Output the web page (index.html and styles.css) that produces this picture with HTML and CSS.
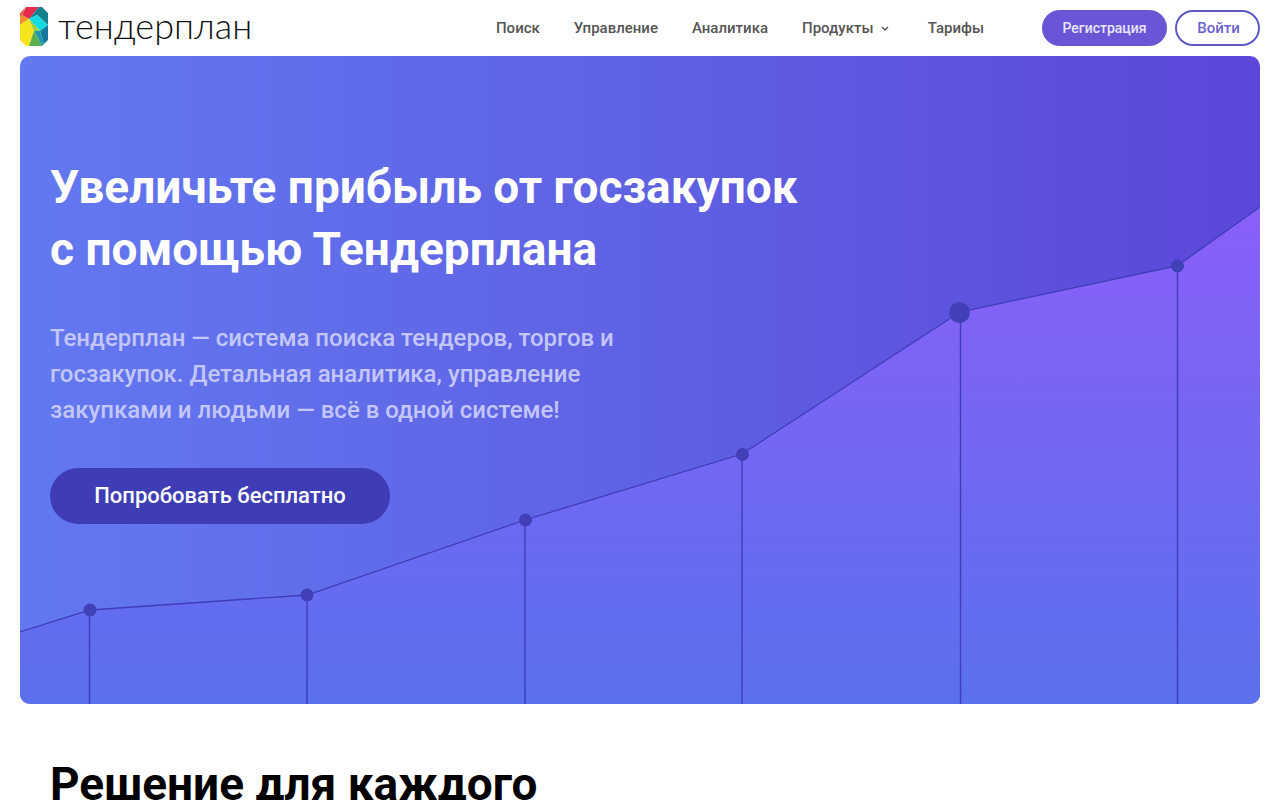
FILE: index.html
```html
<!DOCTYPE html>
<html lang="ru">
<head>
    <meta charset="UTF-8">
    <meta name="viewport" content="width=device-width, initial-scale=1.0">
    <title>Тендерплан</title>
    <link rel="stylesheet" href="styles.css">
</head>
<body>
<header class="navbar">
  <a class="logo" href="#">
    <svg class="logo-mark" viewBox="0 0 28 39" width="28" height="39">
      <polygon points="6,0 19,0 9,12 2,8" fill="#e32b50"/>
      <polygon points="6,0 0,6 0,12 2,8" fill="#f0613a"/>
      <polygon points="2,8 9,12 0,18 0,12" fill="#f58f24"/>
      <polygon points="19,0 22,0 28,6 28,18 17,8 9,12" fill="#16808f"/>
      <polygon points="17,8 28,18 20,24 9,12" fill="#14dbe2"/>
      <polygon points="0,18 9,12 14,24 9,39 6,39 0,33" fill="#f6e51d"/>
      <polygon points="9,12 20,24 14,24" fill="#9ccf3c"/>
      <polygon points="20,24 28,18 28,33 24,37" fill="#13789a"/>
      <polygon points="14,24 20,24 24,37 22,39" fill="#1e9ab0"/>
      <polygon points="14,24 22,39 9,39" fill="#59ae4e"/>
    </svg>
    <span class="logo-text">тендерплан</span>
  </a>
  <nav class="nav-links">
    <a href="#">Поиск</a>
    <a href="#">Управление</a>
    <a href="#">Аналитика</a>
    <a href="#" class="has-menu">Продукты
      <svg viewBox="0 0 8 6" width="8" height="6"><path d="M1 1l3 3 3-3" fill="none" stroke="#555" stroke-width="1.4"/></svg>
    </a>
    <a href="#">Тарифы</a>
  </nav>
  <div class="nav-actions">
    <a href="#" class="btn-register">Регистрация</a>
    <a href="#" class="btn-login">Войти</a>
  </div>
</header>

<section class="hero">
  <!-- chart behind the hero text -->
  <svg class="hero-chart" viewBox="0 0 1240 648" width="1240" height="648">
    <defs>
      <linearGradient id="area" x1="0" y1="0" x2="0" y2="1">
        <stop offset="0" stop-color="#8a5ffa"/>
        <stop offset="1" stop-color="#5a70ec"/>
      </linearGradient>
    </defs>
    <polygon points="0,576 70,554 287,539 505,464 722,398 940,256 1157,210 1240,151 1240,648 0,648" fill="url(#area)"/>
    <polyline points="0,576 70,554 287,539 505,464 722,398 940,256 1157,210 1240,151" fill="none" stroke="#3f3db8" stroke-width="1.3"/>
    <g stroke="#3f3db8" stroke-width="1.4">
      <line x1="69.5" y1="554" x2="69.5" y2="648"/>
      <line x1="287" y1="539" x2="287" y2="648"/>
      <line x1="505" y1="464" x2="505" y2="648"/>
      <line x1="722" y1="398" x2="722" y2="648"/>
      <line x1="940.5" y1="256" x2="940.5" y2="648"/>
      <line x1="1157.5" y1="210" x2="1157.5" y2="648"/>
    </g>
    <g fill="#4140b6">
      <circle cx="70" cy="554" r="6.5"/>
      <circle cx="287" cy="539" r="6.5"/>
      <circle cx="505.500" cy="464" r="6.5"/>
      <circle cx="722.500" cy="398.500" r="6.5"/>
      <circle cx="939.500" cy="256.500" r="10.500"/>
      <circle cx="1157.500" cy="210" r="6.5"/>
    </g>
  </svg>
  <div class="hero-content">
    <h1>Увеличьте прибыль от госзакупок<br>с помощью Тендерплана</h1>
    <p>Тендерплан — система поиска тендеров, торгов и<br>госзакупок. Детальная аналитика, управление<br>закупками и людьми — всё в одной системе!</p>
    <a href="#" class="hero-btn">Попробовать бесплатно</a>
  </div>
</section>

<section class="solutions">
  <h2>Решение для каждого</h2>
</section>
</body>
</html>
```

FILE: styles.css
```css
html, body {
    height: 800px;
    overflow: hidden;
}
body {
    margin: 0;
    background: #fff;
    font-family: Roboto, 'Liberation Sans', sans-serif;
    color: #000;
}
a {
    text-decoration: none;
}
.navbar {
    display: flex;
    align-items: center;
    height: 56px;
    padding: 0 20px;
}
.logo {
    display: flex;
    align-items: center;
    gap: 10px;
    margin-right: auto;
    margin-top: -3px;
}
.logo-mark {
    display: block;
}
.logo-text {
    font-family: Lato, sans-serif;
    font-weight: 300;
    font-size: 36px;
    line-height: 40px;
    letter-spacing: 0.1px;
    color: #111;
    margin-top: -3px;
}
.nav-links {
    display: flex;
    align-items: center;
    gap: 34px;
    margin-right: 58px;
}
.nav-links a {
    color: #555;
    font-size: 15px;
    font-weight: 500;
}
.nav-links .has-menu {
    margin-right: 4.5px;
}
.has-menu svg {
    margin-left: 4px;
    vertical-align: 1px;
}
.nav-actions {
    display: flex;
    gap: 8px;
}
.btn-register, .btn-login {
    display: flex;
    align-items: center;
    justify-content: center;
    box-sizing: border-box;
    height: 36px;
    border-radius: 18px;
    font-size: 14px;
    font-weight: 500;
}
.btn-register {
    width: 125px;
    background: #6a55d6;
    color: #e8e6fb;
}
.btn-login {
    width: 85px;
    padding-left: 2px;
    border: 2px solid #5f58c8;
    color: #6a5fd0;
    background: #fff;
    font-size: 15px;
}
.hero {
    position: relative;
    overflow: hidden;
    height: 648px;
    margin: 0 20px;
    border-radius: 10px;
    background: linear-gradient(90deg, #6279f0 0%, #5f5fe2 55%, #5b47da 100%);
}
.hero-chart {
    position: absolute;
    left: 0;
    top: 0;
    display: block;
}
.hero-content {
    position: relative;
    padding: 100px 30px 0;
}
.hero h1 {
    margin: 0;
    color: #fff;
    font-size: 46px;
    line-height: 62px;
    font-weight: 700;
}
.hero p {
    margin: 40px 0 0;
    color: #c3c6f8;
    font-size: 24px;
    line-height: 36px;
    font-weight: 500;
}
.hero-btn {
    display: flex;
    align-items: center;
    justify-content: center;
    box-sizing: border-box;
    width: 340px;
    height: 56px;
    margin-top: 40px;
    padding-bottom: 2px;
    border-radius: 28px;
    background: #3e3db5;
    color: #fff;
    font-size: 22px;
    font-weight: 500;
}
.solutions {
    padding: 54px 50px 0;
}
.solutions h2 {
    margin: 0;
    font-size: 46px;
    line-height: 52px;
    font-weight: 700;
}
```
